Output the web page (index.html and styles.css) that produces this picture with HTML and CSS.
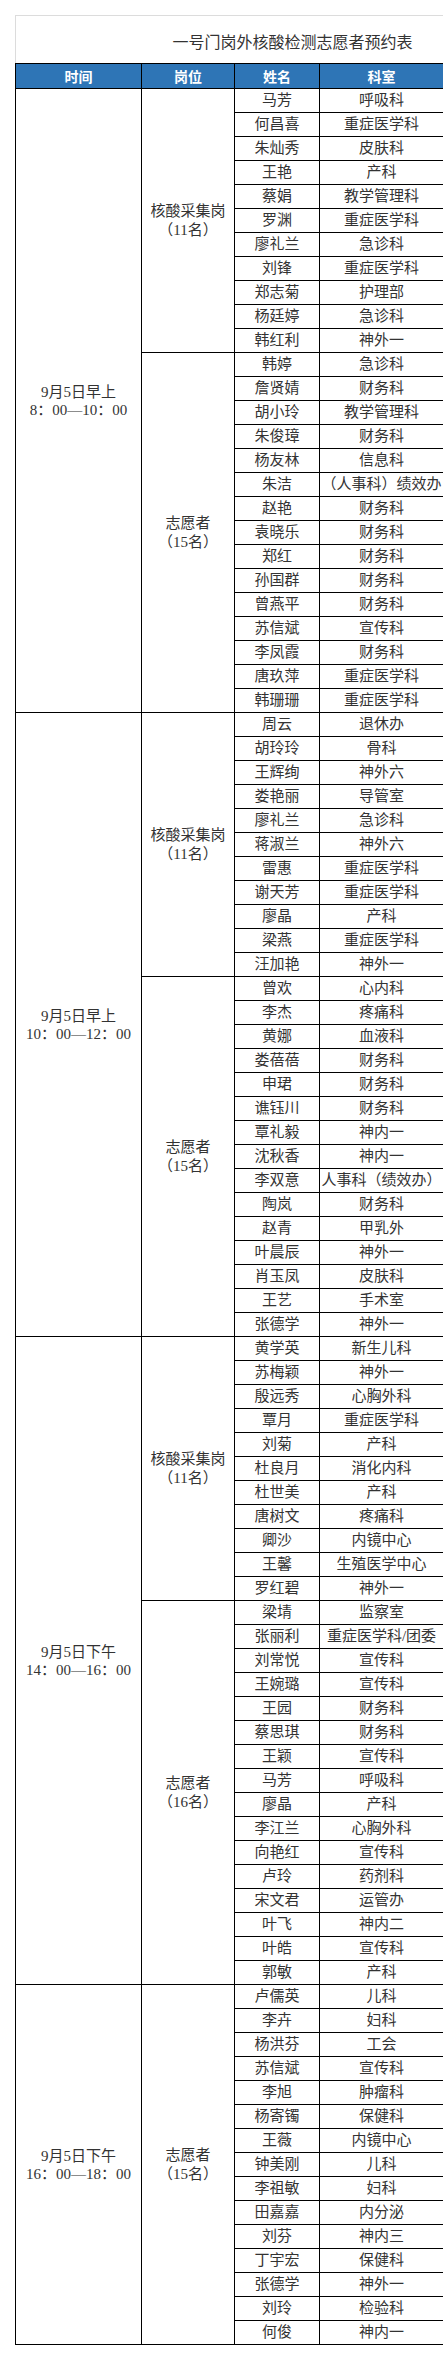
FILE: index.html
```html
<!DOCTYPE html>
<html lang="zh-CN">
<head>
<meta charset="utf-8">
<title>一号门岗外核酸检测志愿者预约表</title>
<link rel="stylesheet" href="styles.css">
</head>
<body>
<div class="page">
  <div class="titlebox">一号门岗外核酸检测志愿者预约表</div>
  <div class="sheet">
    <div class="hd">时间</div><div class="hd">岗位</div><div class="hd">姓名</div><div class="hd">科室</div>

    <div class="time s26"><span>9月5日早上</span><span>8：00—10：00</span></div>
    <div class="pos s11"><span>核酸采集岗</span><span>（11名）</span></div>
    <div class="name">马芳</div><div class="dept">呼吸科</div>
    <div class="name">何昌喜</div><div class="dept">重症医学科</div>
    <div class="name">朱灿秀</div><div class="dept">皮肤科</div>
    <div class="name">王艳</div><div class="dept">产科</div>
    <div class="name">蔡娟</div><div class="dept">教学管理科</div>
    <div class="name">罗渊</div><div class="dept">重症医学科</div>
    <div class="name">廖礼兰</div><div class="dept">急诊科</div>
    <div class="name">刘锋</div><div class="dept">重症医学科</div>
    <div class="name">郑志菊</div><div class="dept">护理部</div>
    <div class="name">杨廷婷</div><div class="dept">急诊科</div>
    <div class="name">韩红利</div><div class="dept">神外一</div>
    <div class="pos s15"><span>志愿者</span><span>（15名）</span></div>
    <div class="name">韩婷</div><div class="dept">急诊科</div>
    <div class="name">詹贤婧</div><div class="dept">财务科</div>
    <div class="name">胡小玲</div><div class="dept">教学管理科</div>
    <div class="name">朱俊璋</div><div class="dept">财务科</div>
    <div class="name">杨友林</div><div class="dept">信息科</div>
    <div class="name">朱洁</div><div class="dept">（人事科）绩效办</div>
    <div class="name">赵艳</div><div class="dept">财务科</div>
    <div class="name">袁晓乐</div><div class="dept">财务科</div>
    <div class="name">郑红</div><div class="dept">财务科</div>
    <div class="name">孙国群</div><div class="dept">财务科</div>
    <div class="name">曾燕平</div><div class="dept">财务科</div>
    <div class="name">苏信斌</div><div class="dept">宣传科</div>
    <div class="name">李凤霞</div><div class="dept">财务科</div>
    <div class="name">唐玖萍</div><div class="dept">重症医学科</div>
    <div class="name">韩珊珊</div><div class="dept">重症医学科</div>

    <div class="time s26"><span>9月5日早上</span><span>10：00—12：00</span></div>
    <div class="pos s11"><span>核酸采集岗</span><span>（11名）</span></div>
    <div class="name">周云</div><div class="dept">退休办</div>
    <div class="name">胡玲玲</div><div class="dept">骨科</div>
    <div class="name">王辉绚</div><div class="dept">神外六</div>
    <div class="name">娄艳丽</div><div class="dept">导管室</div>
    <div class="name">廖礼兰</div><div class="dept">急诊科</div>
    <div class="name">蒋淑兰</div><div class="dept">神外六</div>
    <div class="name">雷惠</div><div class="dept">重症医学科</div>
    <div class="name">谢天芳</div><div class="dept">重症医学科</div>
    <div class="name">廖晶</div><div class="dept">产科</div>
    <div class="name">梁燕</div><div class="dept">重症医学科</div>
    <div class="name">汪加艳</div><div class="dept">神外一</div>
    <div class="pos s15"><span>志愿者</span><span>（15名）</span></div>
    <div class="name">曾欢</div><div class="dept">心内科</div>
    <div class="name">李杰</div><div class="dept">疼痛科</div>
    <div class="name">黄娜</div><div class="dept">血液科</div>
    <div class="name">娄蓓蓓</div><div class="dept">财务科</div>
    <div class="name">申珺</div><div class="dept">财务科</div>
    <div class="name">谯钰川</div><div class="dept">财务科</div>
    <div class="name">覃礼毅</div><div class="dept">神内一</div>
    <div class="name">沈秋香</div><div class="dept">神内一</div>
    <div class="name">李双意</div><div class="dept">人事科（绩效办）</div>
    <div class="name">陶岚</div><div class="dept">财务科</div>
    <div class="name">赵青</div><div class="dept">甲乳外</div>
    <div class="name">叶晨辰</div><div class="dept">神外一</div>
    <div class="name">肖玉凤</div><div class="dept">皮肤科</div>
    <div class="name">王艺</div><div class="dept">手术室</div>
    <div class="name">张德学</div><div class="dept">神外一</div>

    <div class="time s27"><span>9月5日下午</span><span>14：00—16：00</span></div>
    <div class="pos s11"><span>核酸采集岗</span><span>（11名）</span></div>
    <div class="name">黄学英</div><div class="dept">新生儿科</div>
    <div class="name">苏梅颖</div><div class="dept">神外一</div>
    <div class="name">殷远秀</div><div class="dept">心胸外科</div>
    <div class="name">覃月</div><div class="dept">重症医学科</div>
    <div class="name">刘菊</div><div class="dept">产科</div>
    <div class="name">杜良月</div><div class="dept">消化内科</div>
    <div class="name">杜世美</div><div class="dept">产科</div>
    <div class="name">唐树文</div><div class="dept">疼痛科</div>
    <div class="name">卿沙</div><div class="dept">内镜中心</div>
    <div class="name">王馨</div><div class="dept">生殖医学中心</div>
    <div class="name">罗红碧</div><div class="dept">神外一</div>
    <div class="pos s16"><span>志愿者</span><span>（16名）</span></div>
    <div class="name">梁埥</div><div class="dept">监察室</div>
    <div class="name">张丽利</div><div class="dept">重症医学科/团委</div>
    <div class="name">刘常悦</div><div class="dept">宣传科</div>
    <div class="name">王婉璐</div><div class="dept">宣传科</div>
    <div class="name">王园</div><div class="dept">财务科</div>
    <div class="name">蔡思琪</div><div class="dept">财务科</div>
    <div class="name">王颖</div><div class="dept">宣传科</div>
    <div class="name">马芳</div><div class="dept">呼吸科</div>
    <div class="name">廖晶</div><div class="dept">产科</div>
    <div class="name">李江兰</div><div class="dept">心胸外科</div>
    <div class="name">向艳红</div><div class="dept">宣传科</div>
    <div class="name">卢玲</div><div class="dept">药剂科</div>
    <div class="name">宋文君</div><div class="dept">运管办</div>
    <div class="name">叶飞</div><div class="dept">神内二</div>
    <div class="name">叶皓</div><div class="dept">宣传科</div>
    <div class="name">郭敏</div><div class="dept">产科</div>

    <div class="time s15"><span>9月5日下午</span><span>16：00—18：00</span></div>
    <div class="pos s15"><span>志愿者</span><span>（15名）</span></div>
    <div class="name">卢儒英</div><div class="dept">儿科</div>
    <div class="name">李卉</div><div class="dept">妇科</div>
    <div class="name">杨洪芬</div><div class="dept">工会</div>
    <div class="name">苏信斌</div><div class="dept">宣传科</div>
    <div class="name">李旭</div><div class="dept">肿瘤科</div>
    <div class="name">杨寄镯</div><div class="dept">保健科</div>
    <div class="name">王薇</div><div class="dept">内镜中心</div>
    <div class="name">钟美刚</div><div class="dept">儿科</div>
    <div class="name">李祖敏</div><div class="dept">妇科</div>
    <div class="name">田嘉嘉</div><div class="dept">内分泌</div>
    <div class="name">刘芬</div><div class="dept">神内三</div>
    <div class="name">丁宇宏</div><div class="dept">保健科</div>
    <div class="name">张德学</div><div class="dept">神外一</div>
    <div class="name">刘玲</div><div class="dept">检验科</div>
    <div class="name">何俊</div><div class="dept">神内一</div>
  </div>
</div>
</body>
</html>
```

FILE: styles.css
```css
html, body {
  margin: 0;
  padding: 0;
  background: #fff;
}

.page {
  width: 443px;
  overflow: hidden;
  padding: 15px 0 15px 15px;
  box-sizing: border-box;
  font-family: "Liberation Serif", "Noto Sans CJK SC", serif;
  color: #333;
}

.titlebox {
  width: 553px;
  height: 31px;
  padding-top: 16px;
  border: 1px solid #dcdcdc;
  border-bottom: none;
  text-align: center;
  font-size: 16px;
  line-height: 22px;
  color: #333;
}

.sheet {
  display: grid;
  grid-template-columns: 125px 92px 84px 123px;
  grid-template-rows: 24px;
  grid-auto-rows: 23px;
  gap: 1px;
  padding: 1px;
  background: #000;
  width: max-content;
}

.sheet > div {
  background: #fff;
  display: flex;
  flex-direction: column;
  align-items: center;
  justify-content: center;
  text-align: center;
  white-space: nowrap;
  font-size: 15px;
  line-height: 19px;
}

.sheet > .hd {
  background: #2e75b6;
  color: #fff;
  font-family: "Noto Sans CJK SC", sans-serif;
  font-weight: 700;
  font-size: 14px;
  line-height: 20px;
}

.time { grid-column: 1; }
.pos { grid-column: 2; }
.name { grid-column: 3; }
.dept { grid-column: 4; }

.sheet > .time { line-height: 18px; }

.s11 { grid-row: span 11; }
.s15 { grid-row: span 15; }
.s16 { grid-row: span 16; }
.s26 { grid-row: span 26; }
.s27 { grid-row: span 27; }
```
